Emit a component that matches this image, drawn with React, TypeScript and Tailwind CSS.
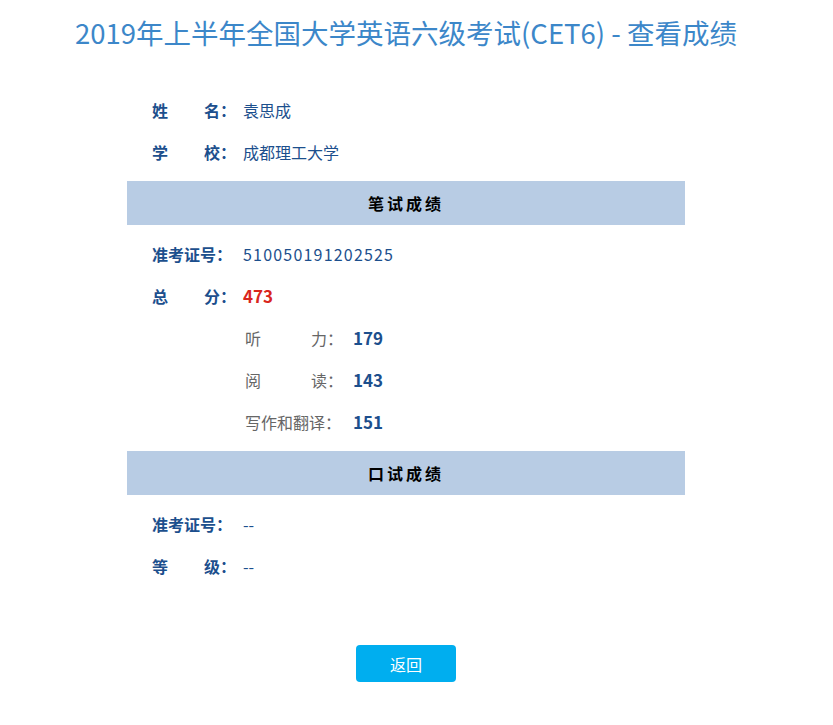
const font = { fontFamily: '"Noto Sans CJK SC", "Noto Sans", sans-serif' };

function Row({ label, children }: { label: string[]; children: React.ReactNode }) {
  return (
    <div className="flex h-[42px] items-center pl-[25px]">
      <div className="flex w-[84px] justify-between text-[16px] font-bold text-[#1c4f8d]">
        {label.map((c, i) => (
          <span key={i}>{c}</span>
        ))}
      </div>
      <div className="ml-[7px] text-[16px] text-[#1c4f8d]">{children}</div>
    </div>
  );
}

function SubRow({ label, value }: { label: string[]; value: string }) {
  return (
    <div className="flex h-[42px] items-center pl-[118px]">
      <div className="flex w-[98px] justify-between text-[16px] text-[#666666]">
        {label.map((c, i) => (
          <span key={i}>{c}</span>
        ))}
      </div>
      <div className="ml-[10px] text-[17px] font-bold text-[#1c4f8d]">{value}</div>
    </div>
  );
}

function Band({ title }: { title: string }) {
  return (
    <div className="my-2 flex h-[44px] items-center justify-center bg-[#b8cce4] text-[16px] font-bold tracking-[3px] text-black">
      {title}
    </div>
  );
}

export default function App() {
  return (
    <div className="min-h-screen bg-white" style={font}>
      <div className="w-[812px]">
        <h1 className="pt-[12px] text-center text-[27.5px] leading-[40px] text-[#3c87c9]">
          2019年上半年全国大学英语六级考试(CET6) - 查看成绩
        </h1>
        <div className="mx-auto mt-[37px] w-[558px]">
          <Row label={["姓", "名："]}>袁思成</Row>
          <Row label={["学", "校："]}>成都理工大学</Row>
          <Band title="笔试成绩" />
          <Row label={["准考证号："]}>
            <span className="tracking-[1.2px]">510050191202525</span>
          </Row>
          <Row label={["总", "分："]}>
            <span className="text-[17px] font-bold text-[#d9261c]">473</span>
          </Row>
          <SubRow label={["听", "力："]} value="179" />
          <SubRow label={["阅", "读："]} value="143" />
          <SubRow label={["写作和翻译："]} value="151" />
          <Band title="口试成绩" />
          <Row label={["准考证号："]}>--</Row>
          <Row label={["等", "级："]}>--</Row>
        </div>
        <div className="mt-[58px] flex justify-center">
          <button className="h-[37px] w-[100px] rounded-[4px] bg-[#00aeef] text-[16px] text-white">返回</button>
        </div>
      </div>
    </div>
  );
}
